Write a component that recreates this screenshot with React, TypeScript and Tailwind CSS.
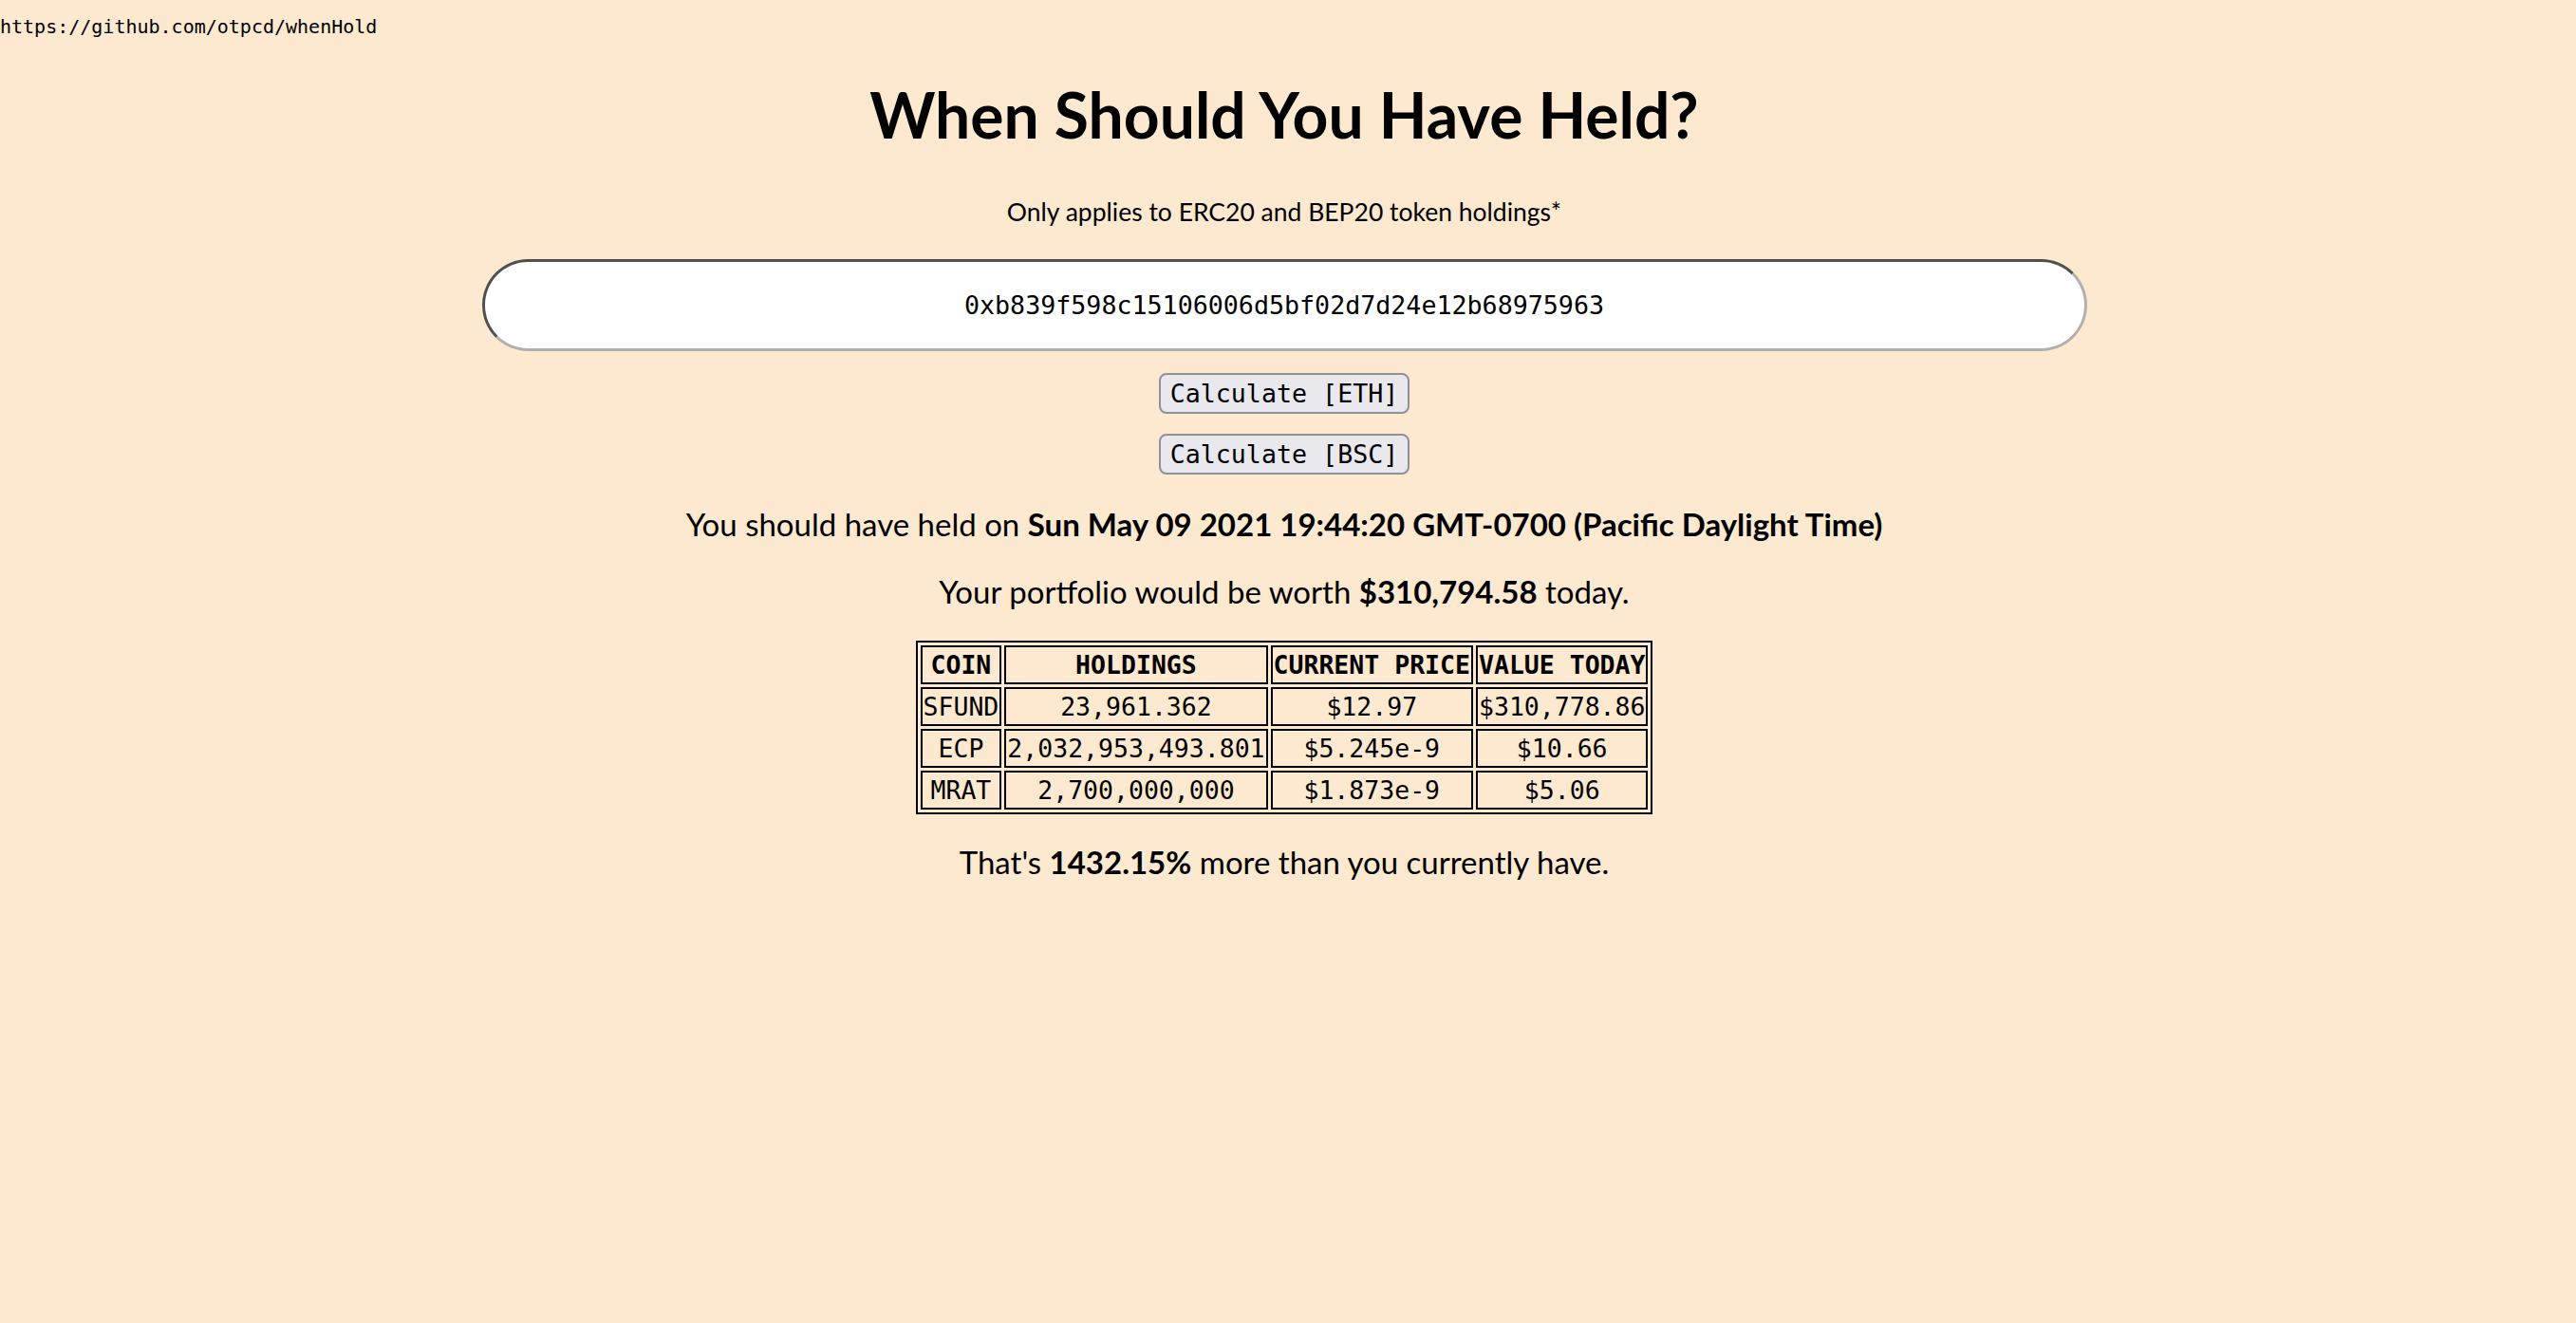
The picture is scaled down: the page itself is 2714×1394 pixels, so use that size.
const rows = [
  { coin: "SFUND", holdings: "23,961.362", price: "$12.97", value: "$310,778.86" },
  { coin: "ECP", holdings: "2,032,953,493.801", price: "$5.245e-9", value: "$10.66" },
  { coin: "MRAT", holdings: "2,700,000,000", price: "$1.873e-9", value: "$5.06" },
];

const mono = "font-['DejaVu_Sans_Mono',monospace]";
const sans = "font-['Lato',sans-serif]";

export default function App() {
  return (
    <div className="min-h-[1394px] bg-[#fce9d0] text-black">
      <div className={`${mono} text-[20px] leading-[24px] pt-[16px]`}>
        https://github.com/otpcd/whenHold
      </div>

      <div className="flex flex-col items-center pr-[8px]">
        <h1 className={`${sans} mt-[41px] text-[66px] leading-[80px] font-bold`}>
          When Should You Have Held?
        </h1>

        <p className={`${sans} mt-[46px] text-[26.5px] leading-[32px]`}>
          Only applies to ERC20 and BEP20 token holdings*
        </p>

        <input
          readOnly
          value="0xb839f598c15106006d5bf02d7d24e12b68975963"
          className={`${mono} mt-[34px] w-[1691px] h-[97px] rounded-full bg-white text-center text-[26.67px] border-[3px] border-t-[#4f4f4f] border-l-[#4f4f4f] border-b-[#b0b0b0] border-r-[#b0b0b0] outline-none`}
        />

        <button className={`${mono} mt-[23px] bg-[#e9e9ed] border-2 border-[#8f8f9d] rounded-[8px] px-[10px] py-[4px] text-[26.67px] leading-[31px]`}>
          Calculate [ETH]
        </button>
        <button className={`${mono} mt-[21px] bg-[#e9e9ed] border-2 border-[#8f8f9d] rounded-[8px] px-[10px] py-[4px] text-[26.67px] leading-[31px]`}>
          Calculate [BSC]
        </button>

        <p className={`${sans} mt-[32px] text-[33px] leading-[40px]`}>
          You should have held on{" "}
          <b>Sun May 09 2021 19:44:20 GMT-0700 (Pacific Daylight Time)</b>
        </p>

        <p className={`${sans} mt-[31px] text-[33px] leading-[40px]`}>
          Your portfolio would be worth <b>$310,794.58</b> today.
        </p>

        <table className={`${mono} mt-[32px] border-2 border-black border-separate border-spacing-[3px] text-[26.5px] leading-[33px]`}>
          <thead>
            <tr>
              {["COIN", "HOLDINGS", "CURRENT PRICE", "VALUE TODAY"].map((h) => (
                <th key={h} className="border-2 border-black px-[1px] py-[2px] font-bold text-center">
                  {h}
                </th>
              ))}
            </tr>
          </thead>
          <tbody>
            {rows.map((r) => (
              <tr key={r.coin}>
                <td className="border-2 border-black px-[1px] py-[2px] text-center">{r.coin}</td>
                <td className="border-2 border-black px-[1px] py-[2px] text-center">{r.holdings}</td>
                <td className="border-2 border-black px-[1px] py-[2px] text-center">{r.price}</td>
                <td className="border-2 border-black px-[1px] py-[2px] text-center">{r.value}</td>
              </tr>
            ))}
          </tbody>
        </table>

        <p className={`${sans} mt-[30px] text-[33px] leading-[40px]`}>
          That's <b>1432.15%</b> more than you currently have.
        </p>
      </div>
    </div>
  );
}
